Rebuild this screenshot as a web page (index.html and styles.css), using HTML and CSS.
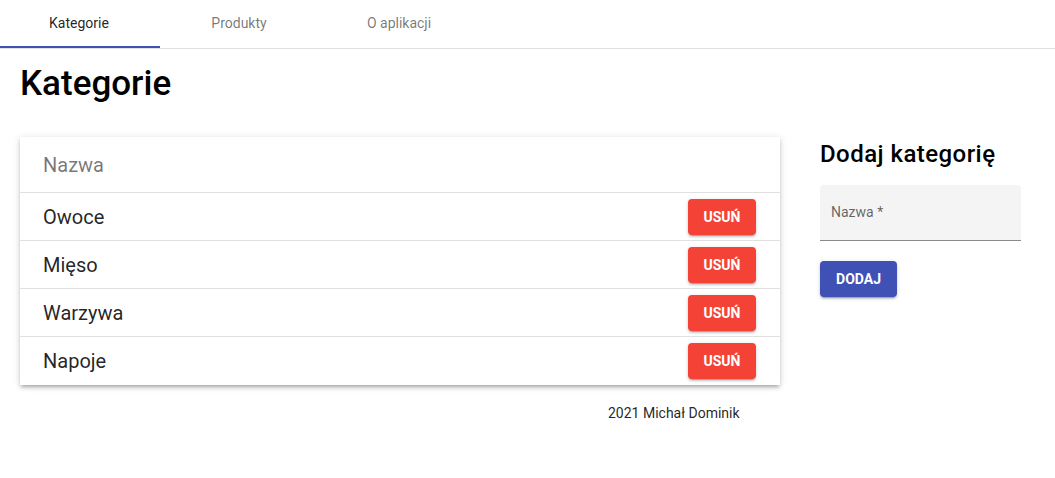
FILE: index.html
```html
<!DOCTYPE html>
<html lang="pl">
<head>
<meta charset="utf-8">
<link rel="stylesheet" href="styles.css">
</head>
<body>
<nav class="tabs">
  <a class="tab active">Kategorie</a>
  <a class="tab">Produkty</a>
  <a class="tab">O aplikacji</a>
</nav>
<main class="page">
  <h1 class="title">Kategorie</h1>
  <div class="content">
    <section class="left">
      <div class="card">
        <div class="row header">Nazwa</div>
        <div class="row"><span>Owoce</span><button class="btn warn">USUŃ</button></div>
        <div class="row"><span>Mięso</span><button class="btn warn">USUŃ</button></div>
        <div class="row"><span>Warzywa</span><button class="btn warn">USUŃ</button></div>
        <div class="row last"><span>Napoje</span><button class="btn warn">USUŃ</button></div>
      </div>
      <footer class="footer">2021 Michał Dominik</footer>
    </section>
    <aside class="right">
      <h2 class="subtitle">Dodaj kategorię</h2>
      <div class="field"><span class="label">Nazwa *</span></div>
      <button class="btn primary">DODAJ</button>
    </aside>
  </div>
</main>
</body>
</html>
```
FILE: styles.css
```css
* { box-sizing: border-box; }
body {
  margin: 0;
  font-family: Roboto, "Helvetica Neue", sans-serif;
  color: #000;
  background: #fff;
}
.tabs {
  display: flex;
  height: 49px;
  border-bottom: 1px solid #e0e0e0;
}
.tab {
  width: 160px;
  height: 48px;
  display: flex;
  align-items: center;
  justify-content: center;
  font-size: 14px;
  color: rgba(0,0,0,0.54);
  padding: 0 2px 3px 0;
}
.tab.active {
  color: rgba(0,0,0,0.87);
  border-bottom: 2px solid #3f51b5;
  padding-bottom: 1px;
}
.page { padding: 0 20px; }
.title {
  margin: 15px 0 0;
  font-size: 35px;
  font-weight: 500;
  line-height: 40px;
  letter-spacing: 0;
}
.content {
  display: flex;
  gap: 40px;
  margin-top: 33px;
}
.left { width: 760px; }
.card {
  background: #fff;
  box-shadow: 0 3px 3px -2px rgba(0,0,0,.2), 0 3px 4px 0 rgba(0,0,0,.14), 0 1px 8px 0 rgba(0,0,0,.12);
}
.row {
  height: 48px;
  display: flex;
  align-items: center;
  justify-content: space-between;
  padding: 0 24px 0 23px;
  font-size: 20px;
  color: rgba(0,0,0,0.87);
  border-bottom: 1px solid #e0e0e0;
}
.row.header {
  height: 56px;
  color: rgba(0,0,0,0.54);
  font-size: 20px;
  font-weight: 400;
}
.row.last { border-bottom: none; }
.btn {
  border: none;
  border-radius: 4px;
  height: 36px;
  padding: 0;
  font-family: Roboto, sans-serif;
  font-size: 14px;
  font-weight: 700;
  color: #fff;
  box-shadow: 0 3px 1px -2px rgba(0,0,0,.2), 0 2px 2px 0 rgba(0,0,0,.14), 0 1px 5px 0 rgba(0,0,0,.12);
}
.btn.warn { background: #f44336; width: 68px; }
.btn.primary { background: #3f51b5; width: 77px; }
.footer {
  font-size: 14px;
  color: rgba(0,0,0,0.87);
  margin-top: 20px;
  padding-left: 588px;
}
.right { width: 201px; }
.subtitle {
  margin: 1px 0 0;
  font-size: 24px;
  font-weight: 500;
  line-height: 32px;
  letter-spacing: 0.45px;
}
.field {
  margin-top: 15px;
  height: 56px;
  background: #f4f4f4;
  border-radius: 4px 4px 0 0;
  border-bottom: 1px solid #8a8a8a;
  padding: 17px 11px 0;
}
.label {
  font-size: 14px;
  color: rgba(0,0,0,0.6);
}
.right .btn { margin-top: 20px; }
```
